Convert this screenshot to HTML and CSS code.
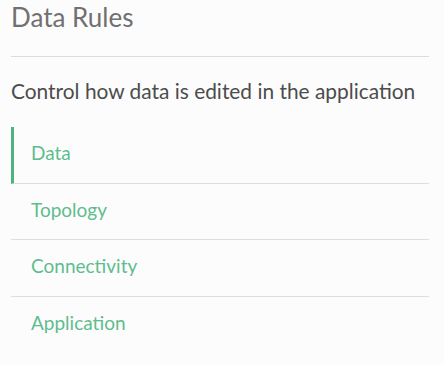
FILE: index.html
```html
<!DOCTYPE html>
<html>
<head>
<meta charset="utf-8">
<link rel="stylesheet" href="styles.css">
</head>
<body>
<div class="panel">
  <h1 class="title">Data Rules</h1>
  <p class="desc">Control how data is edited in the application</p>
  <nav class="menu">
    <a class="item active">Data</a>
    <a class="item">Topology</a>
    <a class="item">Connectivity</a>
    <a class="item">Application</a>
  </nav>
</div>
</body>
</html>
```

FILE: styles.css
```css
html, body {
  margin: 0;
  background: #fcfcfc;
}
body {
  font-family: Lato, "Noto Sans", sans-serif;
}
.panel {
  width: 418px;
  padding: 0 0 0 11px;
}
.title {
  margin: 0;
  padding-top: 1px;
  height: 57px;
  box-sizing: border-box;
  border-bottom: 1px solid #dcdcdc;
  font-size: 26px;
  line-height: 32px;
  font-weight: 400;
  color: #707070;
}
.desc {
  margin: 0;
  padding: 20px 0 0;
  height: 70px;
  box-sizing: border-box;
  font-size: 20.9px;
  line-height: 28px;
  color: #4c4c4c;
  white-space: nowrap;
}
.menu {
  display: flex;
  flex-direction: column;
}
.item {
  display: block;
  height: 56.5px;
  box-sizing: border-box;
  padding-left: 20px;
  line-height: 51px;
  font-size: 19px;
  color: #5fbc8e;
  border-bottom: 1px solid #dedede;
}
.item:last-child {
  border-bottom: none;
}
.item.active {
  border-left: 3px solid #4fb37e;
  padding-left: 17px;
}
```
